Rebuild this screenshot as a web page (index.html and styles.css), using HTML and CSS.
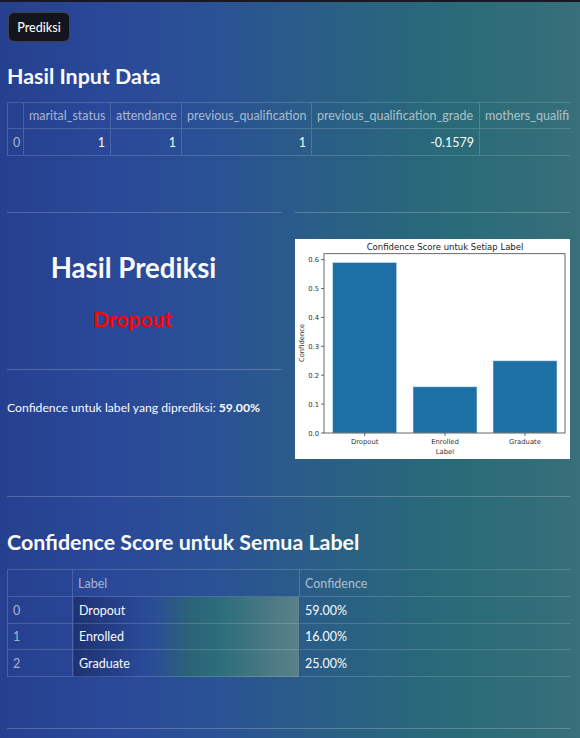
FILE: index.html
```html
<!DOCTYPE html>
<html lang="id">
<head>
<meta charset="utf-8">
<title>Prediksi</title>
<link rel="stylesheet" href="styles.css">
</head>
<body>
<div class="topbar"></div>
<main class="main">
  <button class="btn">Prediksi</button>
  <h3 class="h3 h-input">Hasil Input Data</h3>
  <div class="df df-input">
    <div class="row row-head">
      <div class="cell idx"></div>
      <div class="cell">marital_status</div>
      <div class="cell">attendance</div>
      <div class="cell">previous_qualification</div>
      <div class="cell">previous_qualification_grade</div>
      <div class="cell">mothers_qualification</div>
    </div>
    <div class="row row-body">
      <div class="cell idx">0</div>
      <div class="cell num">1</div>
      <div class="cell num">1</div>
      <div class="cell num">1</div>
      <div class="cell num">-0.1579</div>
      <div class="cell num"></div>
    </div>
  </div>

  <div class="cols">
    <div class="col">
      <hr class="rule">
      <h2 class="pred-title">Hasil Prediksi</h2>
      <div class="pred-label">Dropout</div>
      <hr class="rule rule-2">
      <p class="conf-text">Confidence untuk label yang diprediksi: <b>59.00%</b></p>
    </div>
    <div class="col">
      <hr class="rule">
      <div class="chart">
        <svg width="275" height="220" viewBox="0 0 275 220">
          <rect x="0" y="0" width="275" height="220" fill="#ffffff"/>
          <text x="150" y="11" class="ch-title" text-anchor="middle">Confidence Score untuk Setiap Label</text>
          <rect x="37.7" y="23.5" width="64" height="170.5" class="bar"/>
          <rect x="118" y="147.8" width="64" height="46.2" class="bar"/>
          <rect x="198" y="121.8" width="64" height="72.2" class="bar"/>
          <rect x="29" y="14.7" width="241" height="179.3" fill="none" stroke="#444" stroke-width="0.8"/>
          <g class="ticks" stroke="#444" stroke-width="0.8">
            <line x1="26" y1="194" x2="29" y2="194"/>
            <line x1="26" y1="165.1" x2="29" y2="165.1"/>
            <line x1="26" y1="136.2" x2="29" y2="136.2"/>
            <line x1="26" y1="107.3" x2="29" y2="107.3"/>
            <line x1="26" y1="78.4" x2="29" y2="78.4"/>
            <line x1="26" y1="49.5" x2="29" y2="49.5"/>
            <line x1="26" y1="20.6" x2="29" y2="20.6"/>
            <line x1="69.7" y1="194" x2="69.7" y2="197"/>
            <line x1="150" y1="194" x2="150" y2="197"/>
            <line x1="230" y1="194" x2="230" y2="197"/>
          </g>
          <g class="tl" text-anchor="end">
            <text x="24" y="196.5">0.0</text>
            <text x="24" y="167.6">0.1</text>
            <text x="24" y="138.7">0.2</text>
            <text x="24" y="109.8">0.3</text>
            <text x="24" y="80.9">0.4</text>
            <text x="24" y="52">0.5</text>
            <text x="24" y="23.1">0.6</text>
          </g>
          <g class="tl" text-anchor="middle">
            <text x="69.7" y="205">Dropout</text>
            <text x="150" y="205">Enrolled</text>
            <text x="230" y="205">Graduate</text>
            <text x="150" y="215">Label</text>
          </g>
          <text class="tl" x="0" y="0" text-anchor="middle" transform="translate(9 104) rotate(-90)">Confidence</text>
        </svg>
      </div>
    </div>
  </div>

  <hr class="rule rule-full">
  <h3 class="h3 h-conf">Confidence Score untuk Semua Label</h3>
  <div class="df df-conf">
    <div class="row row-head">
      <div class="cell idx"></div>
      <div class="cell">Label</div>
      <div class="cell">Confidence</div>
    </div>
    <div class="row row-body">
      <div class="cell idx">0</div>
      <div class="cell grad">Dropout</div>
      <div class="cell">59.00%</div>
    </div>
    <div class="row row-body">
      <div class="cell idx">1</div>
      <div class="cell grad">Enrolled</div>
      <div class="cell">16.00%</div>
    </div>
    <div class="row row-body">
      <div class="cell idx">2</div>
      <div class="cell grad">Graduate</div>
      <div class="cell">25.00%</div>
    </div>
  </div>
  <hr class="rule rule-full rule-last">
</main>
</body>
</html>
```

FILE: styles.css
```css
* { box-sizing: border-box; }

html, body {
  margin: 0;
  padding: 0;
}

body {
  width: 580px;
  min-height: 738px;
  overflow: hidden;
  color: #fafafa;
  font-family: Lato, "Open Sans", sans-serif;
  background: linear-gradient(to right,
    #25408e 0%,
    #2a4899 18%,
    #2a5294 38%,
    #2a5e86 55%,
    #29697a 75%,
    #2b6c78 82%,
    #376f7a 100%);
}

.topbar {
  height: 2px;
  background: #171a24;
}

.main {
  padding: 0 10px 0 7px;
}

.btn {
  display: block;
  margin: 10px 0 0 1px;
  height: 30px;
  width: 62px;
  padding: 0;
  background: #13151d;
  color: #fafafa;
  border: 1px solid rgba(250, 250, 250, 0.2);
  border-radius: 6px;
  font-family: Lato, "Open Sans", sans-serif;
  font-size: 12.5px;
  font-weight: 500;
}

.h3 {
  margin: 0;
  font-size: 21.4px;
  line-height: 26px;
  font-weight: 700;
}

.h-input { margin-top: 21px; }

.df {
  width: 563px;
  border-top: 1px solid rgba(255, 255, 255, 0.16);
  border-left: 1px solid rgba(255, 255, 255, 0.16);
  overflow: hidden;
  font-size: 12.5px;
}

.row {
  display: grid;
}

.df-input { margin-top: 13px; }
.df-input .row {
  grid-template-columns: 16px 87px 71px 130px 168px 130px;
}
.df-input .row-head { height: 26px; }
.df-input .row-body { height: 27px; }

.cell {
  display: flex;
  align-items: center;
  padding: 0 5px;
  border-right: 1px solid rgba(255, 255, 255, 0.16);
  border-bottom: 1px solid rgba(255, 255, 255, 0.16);
  white-space: nowrap;
  overflow: hidden;
}

.row-head .cell { color: rgba(250, 250, 250, 0.62); }
.cell.idx { color: rgba(250, 250, 250, 0.62); padding: 0 5px; }
.cell.num { justify-content: flex-end; }

.cols {
  display: flex;
  gap: 13px;
  margin-top: 56px;
}

.col {
  width: 275px;
  flex: none;
}

.rule {
  margin: 0;
  border: 0;
  height: 1px;
  background: rgba(250, 250, 250, 0.22);
}

.pred-title {
  margin: 37px 22px 0 0;
  text-align: center;
  font-size: 27.6px;
  line-height: 36px;
  font-weight: 700;
}

.pred-label {
  margin: 20px 24px 0 0;
  text-align: center;
  color: #ff0000;
  font-size: 21px;
  line-height: 26px;
  font-weight: 700;
}

.rule-2 { margin-top: 37px; }

.conf-text {
  margin: 29px 0 0;
  font-size: 12.2px;
  line-height: 18px;
}
.conf-text b { font-weight: 700; }

.chart {
  margin-top: 26px;
  width: 275px;
  height: 220px;
}
.chart svg { display: block; }

.ch-title {
  font-family: "DejaVu Sans", sans-serif;
  font-size: 8.5px;
  fill: #222;
}
.tl {
  font-family: "DejaVu Sans", sans-serif;
  font-size: 6.8px;
  fill: #333;
}
.bar {
  fill: #1c70a6;
  stroke: #d6e6f2;
  stroke-width: 0.6;
}

.rule-full {
  margin-top: 37px;
  width: 563px;
}

.h-conf { margin-top: 32px; }

.df-conf { margin-top: 14px; }
.df-conf .row {
  grid-template-columns: 65px 227px 271px;
}
.df-conf .row-head { height: 27px; }
.df-conf .row-body { height: 27px; }
.df-conf .row-body:nth-child(3) { height: 26px; }

.cell.grad {
  color: #fafafa;
  background: linear-gradient(to right,
    #1e3272 0%,
    #2a4a9a 32%,
    #2b6478 52%,
    #2c6e7a 65%,
    #5c8189 100%);
  border-left: 1px solid rgba(20, 30, 70, 0.6);
}

.rule-last { margin-top: 51px; }
```
